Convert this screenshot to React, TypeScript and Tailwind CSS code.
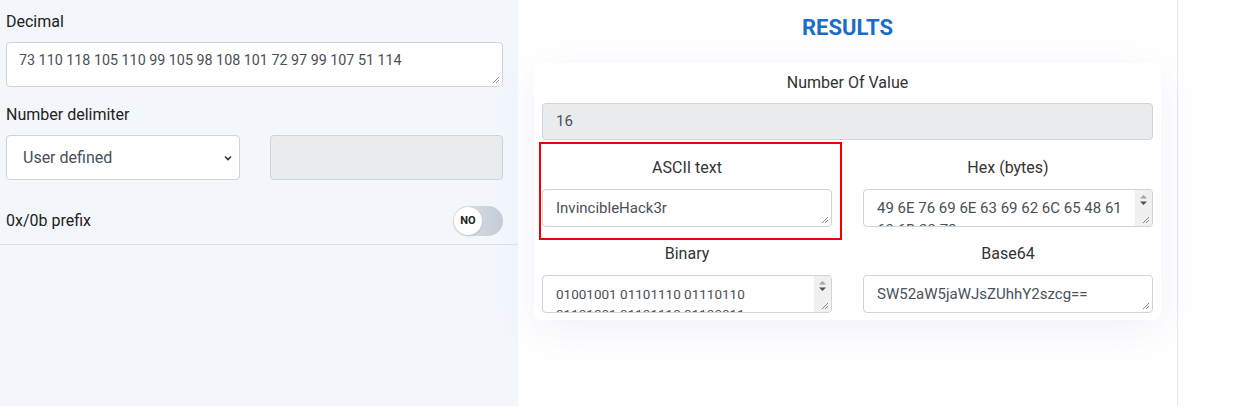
import React from 'react';

const font = { fontFamily: 'Roboto, "Noto Sans", sans-serif' };

const Label: React.FC<{ children: React.ReactNode }> = ({ children }) => (
  <div className="text-center text-[16px] text-[#333] leading-5">{children}</div>
);

const Grip = () => (
  <svg className="absolute right-[2px] bottom-[2px]" width="9" height="9" viewBox="0 0 9 9">
    <path d="M8 2 L2 8 M8 5 L5 8" stroke="#8a8a8a" strokeWidth="1" />
  </svg>
);

const Box: React.FC<{ value: string; spin?: boolean; small?: boolean }> = ({ value, spin, small }) => (
  <div className="relative h-[38px] rounded border border-[#ced4da] bg-white overflow-hidden">
    <div
      className={`px-[13px] pr-6 text-[#495057] break-words ${small ? 'pt-[8px] text-[13.5px] leading-[20px]' : 'pt-[7px] text-[15px] leading-[22px]'}`}
    >
      {value}
    </div>
    {spin && (
      <div className="absolute right-0 top-0 h-full w-[17px] bg-[#f0f0f0] flex flex-col items-center pt-[4px]">
        <svg width="9" height="12" viewBox="0 0 9 12">
          <path d="M1 4.5 L4.5 1 L8 4.5 Z" fill="#a3a3a3" />
          <path d="M1 7.5 L8 7.5 L4.5 11 Z" fill="#505050" />
        </svg>
      </div>
    )}
    <Grip />
  </div>
);

export default function App() {
  return (
    <div className="flex w-[1246px] h-[406px] bg-white overflow-hidden" style={font}>
      <aside className="w-[518px] shrink-0 bg-[#f3f7fc]">
        <div className="pl-[6px] pr-[15px] pt-[12px]">
          <div className="text-[16px] text-[#222] leading-5">Decimal</div>
          <div className="relative mt-[10px] h-[45px] rounded border border-[#ced4da] bg-white">
            <div className="px-[12px] pt-[7px] text-[14.3px] text-[#495057] leading-5">
              73 110 118 105 110 99 105 98 108 101 72 97 99 107 51 114
            </div>
            <Grip />
          </div>
          <div className="mt-[18px] text-[16px] text-[#222] leading-5">Number delimiter</div>
          <div className="mt-[10px] flex gap-[30px]">
            <div className="w-[234px] h-[45px] rounded border border-[#ced4da] bg-white flex items-center justify-between pl-[16px] pr-[6px]">
              <span className="text-[16px] text-[#495057]">User defined</span>
              <svg width="10" height="10" viewBox="0 0 10 10">
                <path d="M2 3.5 L5 6.5 L8 3.5" stroke="#333" strokeWidth="1.6" fill="none" />
              </svg>
            </div>
            <div className="flex-1 h-[45px] rounded border border-[#ced4da] bg-[#e9ecef]" />
          </div>
          <div className="mt-[26px] flex items-center justify-between">
            <span className="text-[16px] text-[#222]">0x/0b prefix</span>
            <div className="w-[50px] h-[30px] rounded-full bg-gradient-to-r from-[#dde2e8] to-[#c3ccd6] flex items-center pl-[1px]">
              <div className="w-[28px] h-[28px] rounded-full bg-white shadow flex items-center justify-center text-[11px] font-bold text-[#222]">
                NO
              </div>
            </div>
          </div>
        </div>
        <div className="mt-[8px] border-t border-[#dee2e6]" />
      </aside>

      <main className="w-[660px] shrink-0 border-r border-[#e5e7eb] px-[16px]">
        <h2 className="mt-[14px] text-center text-[22px] font-bold text-[#1c6dc5] leading-7">RESULTS</h2>
        <div className="mt-[21px] rounded-lg bg-white shadow-[0_10px_40px_rgba(90,100,220,0.09)] px-[8px] pt-[10px] pb-[7px]">
          <Label>Number Of Value</Label>
          <div className="mt-[10px] h-[37px] rounded border border-[#ced4da] bg-[#e9ecef] px-[13px] flex items-center text-[15px] text-[#495057]">
            16
          </div>
          <div className="mt-[2px] grid grid-cols-2 gap-x-[31px]">
            <div className="-ml-[3px] -mr-[10px] border-2 border-[#f00000] pl-[1px] pr-[8px] pt-[14px] pb-[11px]">
              <Label>ASCII text</Label>
              <div className="mt-[11px]"><Box value="InvincibleHack3r" /></div>
            </div>
            <div className="pt-[16px]">
              <Label>Hex (bytes)</Label>
              <div className="mt-[11px]"><Box value="49 6E 76 69 6E 63 69 62 6C 65 48 61 63 6B 33 72" spin /></div>
            </div>
            <div className="pt-[4px]">
              <Label>Binary</Label>
              <div className="mt-[11px]"><Box value="01001001 01101110 01110110 01101001 01101110 01100011" spin small /></div>
            </div>
            <div className="pt-[4px]">
              <Label>Base64</Label>
              <div className="mt-[11px]"><Box value="SW52aW5jaWJsZUhhY2szcg==" /></div>
            </div>
          </div>
        </div>
      </main>
      <div className="flex-1" />
    </div>
  );
}
